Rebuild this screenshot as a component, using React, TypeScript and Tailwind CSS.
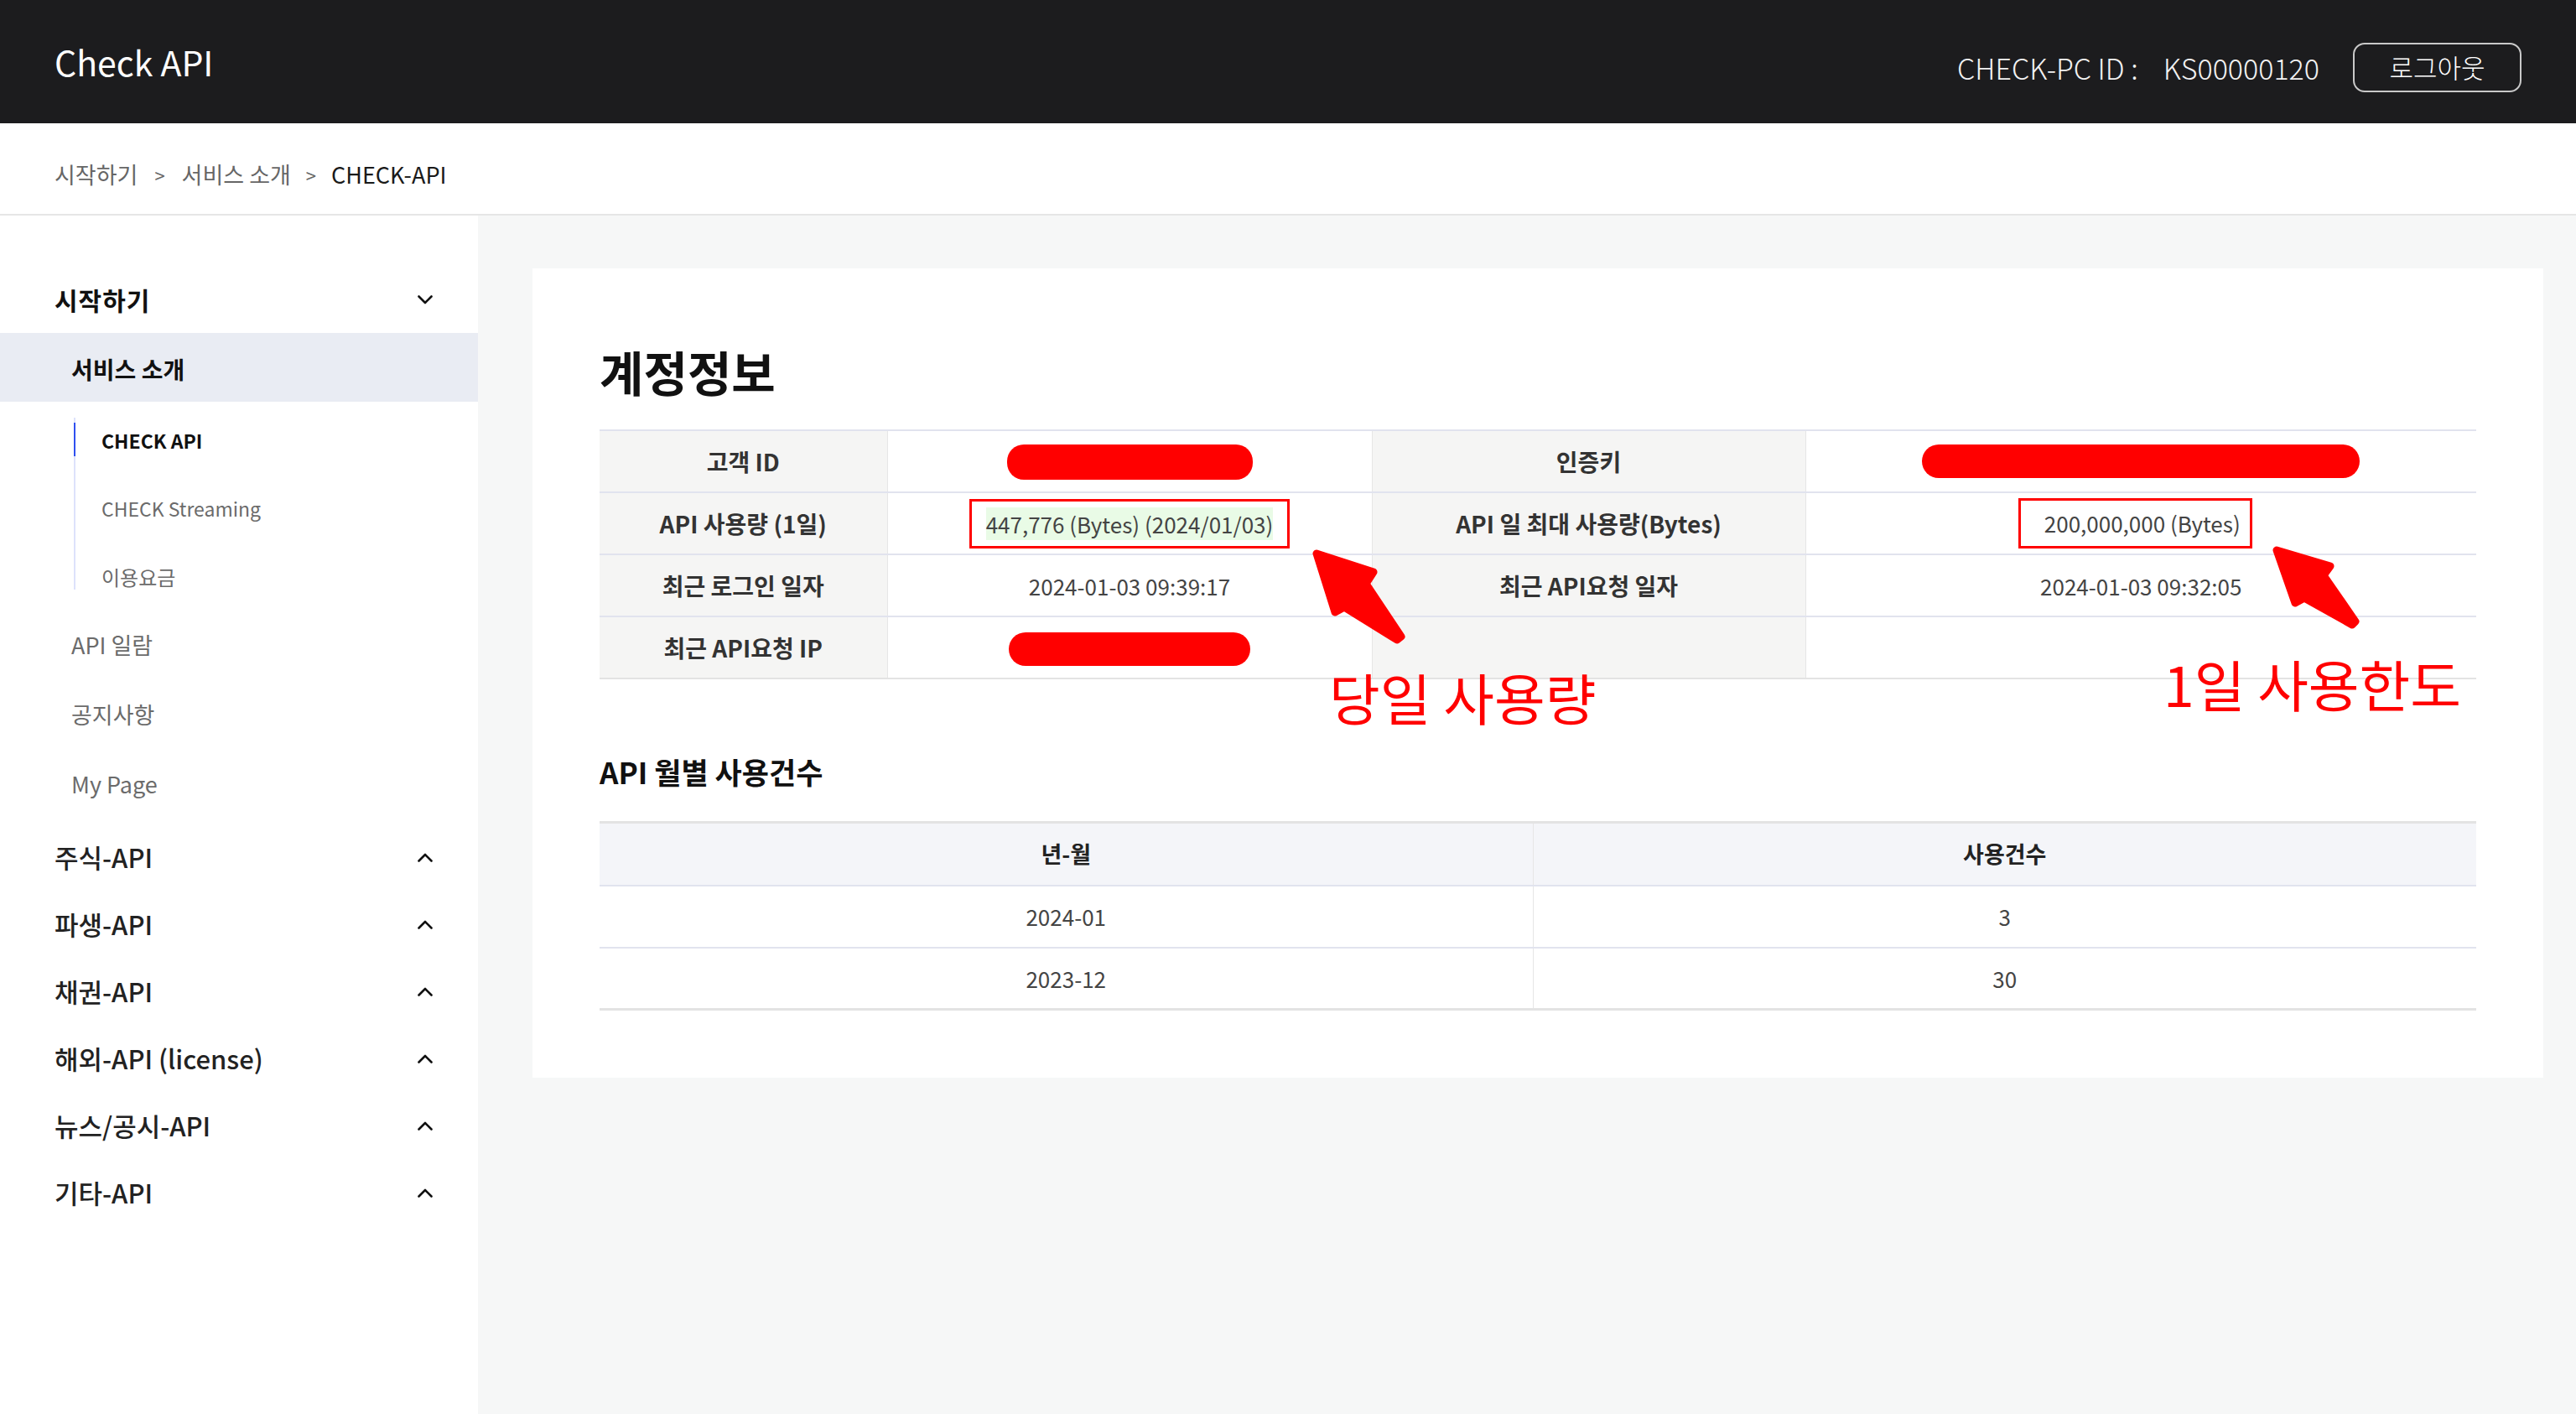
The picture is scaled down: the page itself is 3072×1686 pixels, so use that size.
import React from "react";

const font = "font-['Noto_Sans_CJK_KR','Noto_Sans',sans-serif]";

function Chevron({ up }: { up?: boolean }) {
  return (
    <svg width="18" height="11" viewBox="0 0 18 11" className="shrink-0">
      <polyline
        points={up ? "1.5,9.5 9,2 16.5,9.5" : "1.5,1.5 9,9 16.5,1.5"}
        fill="none"
        stroke="#111"
        strokeWidth="2.6"
        strokeLinecap="round"
        strokeLinejoin="round"
      />
    </svg>
  );
}

const subMenu = ["API 일람", "공지사항", "My Page"];
const categories = ["주식-API", "파생-API", "채권-API", "해외-API (license)", "뉴스/공시-API", "기타-API"];

function Sidebar() {
  return (
    <aside className="w-[570px] shrink-0 bg-white pt-[60px]">
      <div className="flex h-[80px] items-center justify-between pl-[65px] pr-[54px]">
        <span className="text-[30px] font-bold tracking-[1px] text-[#111]">시작하기</span>
        <Chevron />
      </div>
      <div className="flex h-[82px] items-center bg-[#e9ecf3] pl-[85px] pt-[4px]">
        <span className="text-[28px] font-semibold text-[#111]">서비스 소개</span>
      </div>
      <div className="ml-[88px] mt-[19px] flex flex-col border-l-2 border-[#dde2fb]">
        <div className="relative flex h-[54px] items-center pl-[31px]">
          <span className="absolute left-[-2px] top-[6px] h-[40px] w-[2px] bg-[#2f50f0]" />
          <span className="text-[23px] font-bold text-[#111]">CHECK API</span>
        </div>
        <div className="mt-[27px] flex h-[54px] items-center pl-[31px]">
          <span className="text-[23px] text-[#6b6b6b]">CHECK Streaming</span>
        </div>
        <div className="mt-[27px] flex h-[43px] items-end pl-[31px]">
          <span className="text-[24px] leading-[30px] text-[#6b6b6b]">이용요금</span>
        </div>
      </div>
      <div className="mt-[25px] flex flex-col">
        {subMenu.map((item) => (
          <div key={item} className="flex h-[83px] items-center pl-[85px]">
            <span className="text-[27px] text-[#6b6b6b]">{item}</span>
          </div>
        ))}
      </div>
      <div className="mt-[5px] flex flex-col">
        {categories.map((item) => (
          <div key={item} className="flex h-[80px] items-center justify-between pl-[65px] pr-[54px]">
            <span className="text-[31px] font-medium text-[#222]">{item}</span>
            <Chevron up />
          </div>
        ))}
      </div>
    </aside>
  );
}

function AccountTable() {
  const label = "border-r border-[#e6e6e6] bg-[#f5f5f4] text-center text-[28px] font-semibold text-[#333]";
  const value = "border-r border-[#e6e6e6] text-center text-[26px] text-[#444]";
  return (
    <table className="w-full table-fixed border-collapse">
      <colgroup>
        <col className="w-[343px]" />
        <col className="w-[578px]" />
        <col className="w-[517px]" />
        <col />
      </colgroup>
      <tbody>
        <tr className="h-[74px] border-y-2 border-[#e1e3ee]">
          <td className={label}>고객 ID</td>
          <td className={value}>
            <span className="inline-block h-[42px] w-[293px] rounded-[20px] bg-[#ff0000] align-middle" />
          </td>
          <td className={label}>인증키</td>
          <td className="text-center">
            <span className="inline-block h-[40px] w-[522px] rounded-[20px] bg-[#ff0000] align-middle" />
          </td>
        </tr>
        <tr className="h-[74px] border-b-2 border-[#e1e3ee]">
          <td className={label}>API 사용량 (1일)</td>
          <td className={value}>
            <span className="inline-block border-[3px] border-[#ff0000] px-[17px] py-[7px] align-middle">
              <span className="block h-[39px] bg-[#e9fbe6] leading-[39px]">447,776 (Bytes) (2024/01/03)</span>
            </span>
          </td>
          <td className={label}>API 일 최대 사용량(Bytes)</td>
          <td className="text-center text-[26px] text-[#444]">
            <span className="ml-[-14px] inline-block h-[60px] border-[3px] border-[#ff0000] pl-[28px] pr-[11px] align-middle leading-[54px]">
              200,000,000 (Bytes)
            </span>
          </td>
        </tr>
        <tr className="h-[74px] border-b-2 border-[#e1e3ee]">
          <td className={label}>최근 로그인 일자</td>
          <td className={value}>2024-01-03 09:39:17</td>
          <td className={label}>최근 API요청 일자</td>
          <td className="text-center text-[26px] text-[#444]">2024-01-03 09:32:05</td>
        </tr>
        <tr className="h-[74px] border-b-2 border-[#e3e3e3]">
          <td className={label}>최근 API요청 IP</td>
          <td className={value}>
            <span className="inline-block h-[40px] w-[288px] rounded-[20px] bg-[#ff0000] align-middle" />
          </td>
          <td className={label}></td>
          <td></td>
        </tr>
      </tbody>
    </table>
  );
}

const monthly = [
  { month: "2024-01", count: "3" },
  { month: "2023-12", count: "30" },
];

function MonthlyTable() {
  return (
    <table className="w-full table-fixed border-collapse">
      <colgroup>
        <col className="w-[1113px]" />
        <col />
      </colgroup>
      <thead>
        <tr className="h-[75px] border-t-[3px] border-b-2 border-t-[#e3e3e3] border-b-[#e1e3ee] bg-[#f4f5f9] text-[27px]">
          <th className="border-r border-[#e6e6e6] font-semibold text-[#222]">년-월</th>
          <th className="font-semibold text-[#222]">사용건수</th>
        </tr>
      </thead>
      <tbody>
        {monthly.map((row, i) => (
          <tr
            key={row.month}
            className={
              i === monthly.length - 1
                ? "h-[74px] border-b-[3px] border-[#e3e3e3] text-[26px]"
                : "h-[74px] border-b-2 border-[#e1e3ee] text-[26px]"
            }
          >
            <td className="border-r border-[#e6e6e6] text-center text-[#444]">{row.month}</td>
            <td className="text-center text-[#444]">{row.count}</td>
          </tr>
        ))}
      </tbody>
    </table>
  );
}

function Annotations() {
  return (
    <>
      <svg className="pointer-events-none absolute inset-0 h-full w-full" aria-hidden>
        <polygon
          points="935,340 1003,362 994,376 1036,439 1031,443 968,404 957,410"
          fill="#ff0000"
          stroke="#ff0000"
          strokeWidth="9"
          strokeLinejoin="round"
        />
        <polygon
          points="2080,336 2144,355 2136,366 2174,421 2170,425 2113,393 2102,399"
          fill="#ff0000"
          stroke="#ff0000"
          strokeWidth="9"
          strokeLinejoin="round"
        />
      </svg>
      <span className="absolute left-[950px] top-[477px] text-[66px] leading-none text-[#ff0000]">당일 사용량</span>
      <span className="absolute left-[1945px] top-[461px] text-[66px] leading-none text-[#ff0000]">1일 사용한도</span>
    </>
  );
}

export default function App() {
  return (
    <div className={`flex min-h-screen flex-col bg-white ${font}`}>
      <header className="flex h-[147px] shrink-0 items-center justify-between bg-[#1c1c1e] px-[65px] text-white">
        <span className="text-[41px] leading-none">Check API</span>
        <div className="flex items-center pt-[14px]">
          <span className="text-[34px] font-light text-[#f2f2f2]">CHECK-PC ID :</span>
          <span className="ml-[30px] text-[34px] font-light text-[#f2f2f2]">KS00000120</span>
          <button className="ml-[40px] flex h-[59px] w-[201px] items-center justify-center rounded-[14px] border-2 border-[#c9c9c9] text-[31px] font-light text-white">
            로그아웃
          </button>
        </div>
      </header>

      <nav className="flex h-[110px] shrink-0 items-center border-b-2 border-[#e6e6e6] px-[65px] pt-[14px] text-[27px]">
        <span className="text-[#666]">시작하기</span>
        <span className="mx-[20px] text-[22px] text-[#666]">&gt;</span>
        <span className="text-[#666]">서비스 소개</span>
        <span className="mx-[18px] text-[22px] text-[#666]">&gt;</span>
        <span className="text-[#1a1a1a]">CHECK-API</span>
      </nav>

      <div className="flex flex-1">
        <Sidebar />
        <main className="flex-1 bg-[#f6f7f7] pb-[60px] pl-[65px] pr-[39px] pt-[63px]">
          <section className="relative bg-white px-[80px] pb-[80px] pt-[88px]">
            <h1 className="text-[57px] font-bold leading-[68px] text-[#111]">계정정보</h1>
            <div className="mt-[36px]">
              <AccountTable />
            </div>
            <h2 className="mt-[87px] text-[35px] font-bold leading-[46px] text-[#111]">API 월별 사용건수</h2>
            <div className="mt-[36px]">
              <MonthlyTable />
            </div>
            <Annotations />
          </section>
        </main>
      </div>
    </div>
  );
}
